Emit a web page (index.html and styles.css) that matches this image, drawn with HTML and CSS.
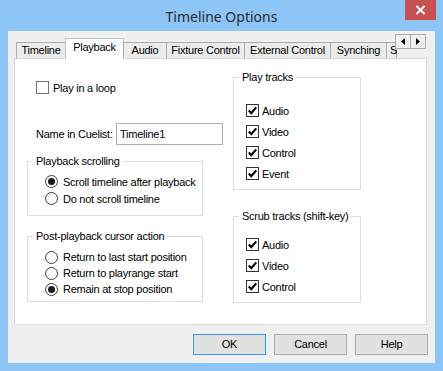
FILE: index.html
```html
<!DOCTYPE html>
<html>
<head>
    <title>Timeline Options</title>
    <link rel="stylesheet" href="styles.css">
</head>
<body>
    <div class="window">
        <div class="titlebar">
            <span class="title">Timeline Options</span>
            <div class="close">
                <svg width="11" height="10" viewBox="0 0 11 10"><path d="M1.5 1 L9.5 9 M9.5 1 L1.5 9" stroke="#fff" stroke-width="2"/></svg>
            </div>
        </div>
        <div class="client">
            <div class="tabs">
                <div class="tab w-timeline">Timeline</div>
                <div class="tab selected w-playback">Playback</div>
                <div class="tab w-audio">Audio</div>
                <div class="tab w-fixture">Fixture Control</div>
                <div class="tab w-external">External Control</div>
                <div class="tab w-synching">Synching</div>
                <div class="tab w-partial">S</div>
                <div class="scroller">
                    <div class="scroll-btn"><svg width="4" height="7" viewBox="0 0 4 7"><path d="M4 0 L0 3.5 L4 7 Z" fill="#000"/></svg></div>
                    <div class="scroll-btn"><svg width="4" height="7" viewBox="0 0 4 7"><path d="M0 0 L4 3.5 L0 7 Z" fill="#000"/></svg></div>
                </div>
            </div>
            <div class="panel">
                <div class="col-left">
                    <div class="loop-row">
                        <span class="checkbox plain"></span>
                        <span>Play in a loop</span>
                    </div>
                    <div class="name-row">
                        <span class="name-label">Name in Cuelist:</span>
                        <div class="textbox">Timeline1</div>
                    </div>
                    <div class="group scroll-group">
                        <div class="group-title">Playback scrolling</div>
                        <div class="radio-row tall"><span class="radio checked"></span>Scroll timeline after playback</div>
                        <div class="radio-row tall"><span class="radio"></span>Do not scroll timeline</div>
                    </div>
                    <div class="group cursor-group">
                        <div class="group-title">Post-playback cursor action</div>
                        <div class="radio-row"><span class="radio"></span>Return to last start position</div>
                        <div class="radio-row"><span class="radio"></span>Return to playrange start</div>
                        <div class="radio-row"><span class="radio checked"></span>Remain at stop position</div>
                    </div>
                </div>
                <div class="col-right">
                    <div class="group play-group">
                        <div class="group-title">Play tracks</div>
                        <div class="check-row"><span class="checkbox"><svg width="11" height="11" viewBox="0 0 11 11"><path d="M1.8 5.6 L4.3 8.2 L9.2 2.4" stroke="#000" stroke-width="2.2" fill="none"/></svg></span>Audio</div>
                        <div class="check-row"><span class="checkbox"><svg width="11" height="11" viewBox="0 0 11 11"><path d="M1.8 5.6 L4.3 8.2 L9.2 2.4" stroke="#000" stroke-width="2.2" fill="none"/></svg></span>Video</div>
                        <div class="check-row"><span class="checkbox"><svg width="11" height="11" viewBox="0 0 11 11"><path d="M1.8 5.6 L4.3 8.2 L9.2 2.4" stroke="#000" stroke-width="2.2" fill="none"/></svg></span>Control</div>
                        <div class="check-row"><span class="checkbox"><svg width="11" height="11" viewBox="0 0 11 11"><path d="M1.8 5.6 L4.3 8.2 L9.2 2.4" stroke="#000" stroke-width="2.2" fill="none"/></svg></span>Event</div>
                    </div>
                    <div class="group scrub-group">
                        <div class="group-title">Scrub tracks (shift-key)</div>
                        <div class="check-row"><span class="checkbox"><svg width="11" height="11" viewBox="0 0 11 11"><path d="M1.8 5.6 L4.3 8.2 L9.2 2.4" stroke="#000" stroke-width="2.2" fill="none"/></svg></span>Audio</div>
                        <div class="check-row"><span class="checkbox"><svg width="11" height="11" viewBox="0 0 11 11"><path d="M1.8 5.6 L4.3 8.2 L9.2 2.4" stroke="#000" stroke-width="2.2" fill="none"/></svg></span>Video</div>
                        <div class="check-row"><span class="checkbox"><svg width="11" height="11" viewBox="0 0 11 11"><path d="M1.8 5.6 L4.3 8.2 L9.2 2.4" stroke="#000" stroke-width="2.2" fill="none"/></svg></span>Control</div>
                    </div>
                </div>
            </div>
            <div class="buttons">
                <div class="button default">OK</div>
                <div class="button">Cancel</div>
                <div class="button">Help</div>
            </div>
        </div>
    </div>
</body>
</html>
```

FILE: styles.css
```css
body {
    margin: 0;
    font-family: "Liberation Sans", Arial, sans-serif;
    font-size: 11px;
    letter-spacing: -0.25px;
    color: #000;
}
.window {
    width: 443px;
    height: 371px;
    background-color: #8dc5f7;
    display: flex;
    flex-direction: column;
    position: relative;
}
.titlebar {
    height: 31px;
    display: flex;
    justify-content: center;
    align-items: center;
}
.title {
    font-family: "Noto Sans", sans-serif;
    font-size: 14px;
    letter-spacing: 0;
    color: #2b2b2b;
    margin-top: 1px;
}
.close {
    position: absolute;
    left: 405px;
    top: 0;
    width: 31px;
    height: 20px;
    background-color: #c75050;
    display: flex;
    justify-content: center;
    align-items: center;
}
.client {
    margin: 0 8px;
    height: 332px;
    background-color: #f0f0f0;
    display: flex;
    flex-direction: column;
}
.tabs {
    display: flex;
    align-items: flex-end;
    height: 27px;
    padding-left: 8px;
    position: relative;
    z-index: 1;
}
.tab {
    box-sizing: border-box;
    height: 16px;
    border: 1px solid #acacac;
    border-bottom: none;
    margin-left: -1px;
    background-color: #ececec;
    text-align: center;
    line-height: 15px;
    white-space: nowrap;
}
.tab.selected {
    height: 21px;
    margin-bottom: -1px;
    background-color: #fff;
    line-height: 17px;
    border-color: #c3c3c3;
}
.w-timeline { width: 50px; margin-left: 0; }
.w-playback { width: 59px; }
.w-audio { width: 44px; }
.w-fixture { width: 79px; }
.w-external { width: 87px; }
.w-synching { width: 57px; }
.w-partial { width: 11px; text-align: left; padding-left: 3px; }
.scroller {
    display: flex;
    align-self: flex-start;
    margin-top: 3px;
    margin-left: -1px;
}
.scroll-btn {
    box-sizing: border-box;
    width: 16px;
    height: 15px;
    border: 1px solid #acacac;
    background-color: #f0f0f0;
    margin-left: -1px;
    display: flex;
    justify-content: center;
    align-items: center;
}
.panel {
    box-sizing: border-box;
    margin-left: 6px;
    width: 413px;
    height: 267px;
    background-color: #fff;
    border: 1px solid #d9d9d9;
    display: flex;
    padding-left: 12px;
    gap: 30px;
}
.col-left {
    width: 176px;
    flex-shrink: 0;
}
.col-right {
    width: 128px;
    flex-shrink: 0;
}
.checkbox {
    box-sizing: border-box;
    width: 13px;
    height: 13px;
    border: 1px solid #333;
    background-color: #fff;
    display: inline-flex;
    justify-content: center;
    align-items: center;
    flex-shrink: 0;
}
.checkbox.plain {
    border-color: #707070;
}
.radio {
    box-sizing: border-box;
    width: 13px;
    height: 13px;
    border: 1px solid #3c3c3c;
    border-radius: 50%;
    background-color: #fff;
    display: inline-flex;
    justify-content: center;
    align-items: center;
    margin-right: 5px;
    flex-shrink: 0;
}
.radio.checked::after {
    content: "";
    width: 7px;
    height: 7px;
    border-radius: 50%;
    background-color: #1a1a1a;
}
.loop-row {
    display: flex;
    align-items: center;
    gap: 4px;
    height: 13px;
    margin-top: 22px;
    padding-left: 9px;
}
.name-row {
    display: flex;
    align-items: center;
    margin-top: 29px;
    padding-left: 9px;
}
.name-label {
    width: 80px;
    flex-shrink: 0;
    white-space: nowrap;
}
.textbox {
    box-sizing: border-box;
    width: 107px;
    height: 22px;
    flex-shrink: 0;
    border: 1px solid #abadb3;
    padding: 3px 0 0 3px;
    line-height: 14px;
}
.group {
    border: 1px solid #dcdcdc;
}
.group-title {
    width: fit-content;
    margin: -7px 0 0 5px;
    padding: 0 3px;
    line-height: 13px;
    white-space: nowrap;
    background-color: #fff;
}
.scroll-group {
    margin-top: 16px;
    padding-bottom: 8px;
}
.scroll-group .group-title {
    margin-bottom: 5px;
}
.cursor-group {
    margin-top: 20px;
    padding-bottom: 4px;
}
.cursor-group .group-title {
    margin-bottom: 6px;
}
.radio-row {
    display: flex;
    align-items: center;
    height: 16px;
    padding-left: 17px;
}
.radio-row.tall {
    height: 17px;
}
.play-group {
    margin-top: 18px;
    padding-bottom: 5px;
}
.play-group .group-title {
    margin-bottom: 16px;
}
.scrub-group {
    margin-top: 26px;
    padding-bottom: 5px;
}
.scrub-group .group-title {
    margin-bottom: 11px;
}
.check-row {
    display: flex;
    align-items: center;
    gap: 3px;
    height: 21px;
    padding-left: 12px;
}
.buttons {
    display: flex;
    justify-content: flex-end;
    gap: 8px;
    margin-top: 9px;
    padding-right: 7px;
}
.button {
    box-sizing: border-box;
    width: 73px;
    height: 21px;
    border: 1px solid #adadad;
    background-color: #e1e1e1;
    text-align: center;
    line-height: 19px;
}
.button.default {
    border-color: #3399ff;
}
```
